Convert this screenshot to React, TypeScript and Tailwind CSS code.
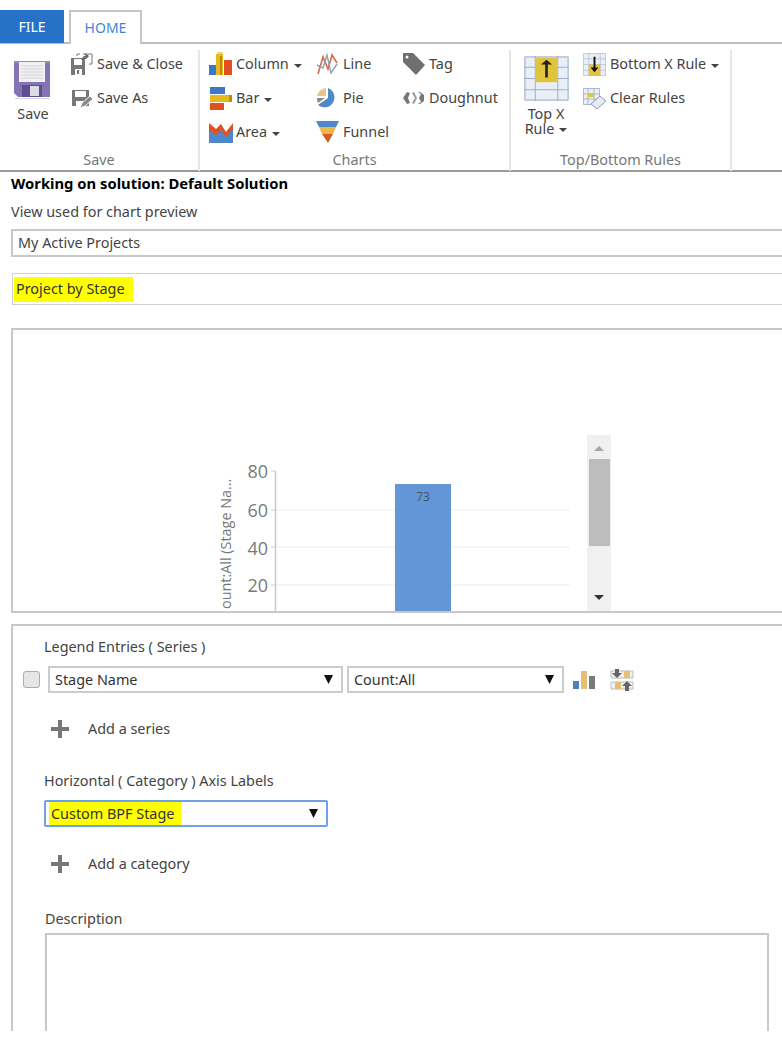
import React from 'react';

const Caret: React.FC<{ inline?: boolean }> = ({ inline }) => (
  <svg width="8" height="4" viewBox="0 0 8 4" className={inline ? 'ml-[5px] inline-block align-middle' : 'ml-[5px] mt-[3px] shrink-0'}>
    <path d="M0 0h8L4 4z" fill="#444" />
  </svg>
);

const SaveBig = () => (
  <svg width="38" height="40" viewBox="0 0 38 40">
    <path d="M1 1h36v36H5l-4-4z" fill="#8573b5" />
    <path d="M1 1h36v2H1z" fill="#9a8ac4" />
    <path d="M6 2h26v20H6z" fill="#f1f1f4" />
    <path d="M8 6h22M8 9h22M8 12h22M8 15h22M8 18h22" stroke="#d4d4da" strokeWidth="1" />
    <path d="M9 25h20v12H9z" fill="#5f4e91" />
    <path d="M17 26h9v10h-9z" fill="#dcdce2" />
    <path d="M2 38h35v1H2z" fill="#d5d5d5" />
  </svg>
);

const SaveClose = () => (
  <svg width="23" height="23" viewBox="0 0 23 23">
    <path d="M1 5h14v17H1z" fill="#777" />
    <path d="M4 6h8v6H4z" fill="#fff" />
    <path d="M5 16h7v6H5z" fill="#fff" />
    <path d="M7 17h2v4H7z" fill="#777" />
    <path d="M13 1h9M22 1v10M19 11h3M7 3V1h3" stroke="#777" fill="none" />
    <path d="M12 7c1-3 3-4 6-4M15 1l3 2-3 3" stroke="#666" strokeWidth="1.4" fill="none" />
  </svg>
);

const SaveAs = () => (
  <svg width="23" height="23" viewBox="0 0 23 23">
    <path d="M2 3h17v16H2z" fill="#777" />
    <path d="M5 4h11v6H5z" fill="#fff" />
    <path d="M6 14h7v5H6z" fill="#fff" />
    <path d="M10 21l2-5 8-7 3 3-8 7z" fill="#888" stroke="#fff" strokeWidth="1" />
  </svg>
);

const ColumnIcon = () => (
  <svg width="24" height="24" viewBox="0 0 24 24">
    <path d="M0 13h7v10H0z" fill="#3a78c8" />
    <path d="M7 2h7v21H7z" fill="#e8b820" />
    <path d="M9 0h4l1 2H8z" fill="#f2d56a" />
    <path d="M15 8h8v15h-8z" fill="#e2501f" />
    <path d="M11 4h2v19h-2z" fill="#b98c10" />
  </svg>
);

const BarIcon = () => (
  <svg width="24" height="24" viewBox="0 0 24 24">
    <path d="M1 1h15v7H1z" fill="#3a78c8" />
    <path d="M1 9h22v7H1z" fill="#e8b820" />
    <path d="M20 9h3v7h-3z" fill="#b98c10" />
    <path d="M1 17h14v7H1z" fill="#e2501f" />
  </svg>
);

const AreaIcon = () => (
  <svg width="24" height="22" viewBox="0 0 24 22">
    <path d="M0 6l7 5 6-3 5 6 6-8v16H0z" fill="#4f88c9" />
    <path d="M0 2l7 6 5-5 5 8 7-9v6l-7 8-5-7-5 5-7-5z" fill="#e2501f" />
  </svg>
);

const LineIcon = () => (
  <svg width="22" height="24" viewBox="0 0 22 24">
    <path d="M2 22L7 5l5 12 4-14 5 8" stroke="#d9694a" strokeWidth="1.6" fill="none" />
    <path d="M1 13l6 3 4-13 4 18 6-9" stroke="#8f9fb8" strokeWidth="1.4" fill="none" />
  </svg>
);

const PieIcon = () => (
  <svg width="22" height="22" viewBox="0 0 22 22">
    <path d="M12 1a10 10 0 1 1-10 17l10-7z" fill="#4f88c9" />
    <path d="M10 1v8H1a10 10 0 0 1 9-8z" fill="#e6c48a" />
    <path d="M1 11h8l-7 5a10 10 0 0 1-1-5z" fill="#8a8a8a" />
  </svg>
);

const FunnelIcon = () => (
  <svg width="24" height="24" viewBox="0 0 24 24">
    <path d="M0 1h23l-3 6H3z" fill="#4f88c9" />
    <path d="M3 7h17l-3 7H6z" fill="#ecb64c" />
    <path d="M6 14h11l-5 9z" fill="#cf5f24" />
  </svg>
);

const TagIcon = () => (
  <svg width="24" height="24" viewBox="0 0 24 24">
    <path d="M1 1h10l12 12-9 10L1 10z" fill="#6f6f6f" />
    <circle cx="5" cy="5" r="1.5" fill="#fff" />
  </svg>
);

const DoughnutIcon = () => (
  <svg width="24" height="14" viewBox="0 0 24 14">
    <path d="M5 1L1 7l4 6 3-1-2-5 2-5z" fill="#777" />
    <path d="M10 2l3 5-3 5 2 1 3-6-3-6z" fill="#999" />
    <path d="M16 1l3 2-2 4 2 4-3 2 2 0 4-3V4l-4-3z" fill="#777" />
  </svg>
);

const RuleGrid: React.FC<{ size: number; arrow: 'up' | 'down' }> = ({ size, arrow }) => (
  <svg width={size} height={size} viewBox="0 0 24 24">
    <path d="M0 0h24v24H0z" fill="#e9eef7" />
    <path d="M.5.5h23v23H.5zM6 0v24M18 0v24M0 6h24M0 12h24M0 18h24" stroke="#9aaac4" strokeWidth=".5" fill="none" />
    {arrow === 'up' ? (
      <>
        <path d="M6 1h12v13H6z" fill="#e2c43c" />
        <path d="M11.3 4.5v7h1.4v-7H15L12 2 9 4.5z" fill="#222" />
      </>
    ) : (
      <>
        <path d="M6 12h12v12H6z" fill="#e2c43c" />
        <path d="M11 4h2v11h3l-4 5-4-5h3z" fill="#111" />
      </>
    )}
  </svg>
);

const ClearRules = () => (
  <svg width="23" height="23" viewBox="0 0 23 23">
    <path d="M0 1h17v17H0z" fill="#e9eef7" />
    <path d="M.5 1.5h16v16H.5zM5 1v17M11 1v17M0 7h17M0 12h17" stroke="#8a9ab4" strokeWidth=".6" fill="none" />
    <path d="M5 6h6v4H5z" fill="#e2c43c" />
    <path d="M8 17l9-8 6 5-9 8z" fill="#e6ebf2" stroke="#8a9ab4" />
  </svg>
);

const RibbonItem: React.FC<{ icon: React.ReactNode; label: string; caret?: boolean }> = ({ icon, label, caret }) => (
  <div className="flex h-[34px] items-center">
    <div className="flex w-[27px] shrink-0 justify-start">{icon}</div>
    <span className="whitespace-nowrap">{label}</span>
    {caret && <Caret />}
  </div>
);

const RibbonGroup: React.FC<{ width: string; label: string; children: React.ReactNode }> = ({ width, label, children }) => (
  <div className={`flex h-[121px] flex-col border-r-2 border-[#e6e6e6] ${width}`}>
    <div className="flex h-[100px] flex-none">{children}</div>
    <div className="text-center text-[#777]">{label}</div>
  </div>
);

const Ribbon = () => (
  <div className="h-[128px] border-b-2 border-[#999] pt-[6px] text-[#444]">
    <div className="flex">
      <RibbonGroup width="w-[200px]" label="Save">
        <div className="flex w-[68px] flex-col items-center pr-[4px] pt-[10px]">
          <SaveBig />
          <span className="ml-[2px] mt-[4px]">Save</span>
        </div>
        <div className="-mt-[3px] ml-[2px]">
          <RibbonItem icon={<SaveClose />} label="Save & Close" />
          <RibbonItem icon={<SaveAs />} label="Save As" />
        </div>
      </RibbonGroup>
      <RibbonGroup width="w-[311px]" label="Charts">
        <div className="-mt-[3px] w-[116px] pl-[9px]">
          <RibbonItem icon={<ColumnIcon />} label="Column" caret />
          <RibbonItem icon={<BarIcon />} label="Bar" caret />
          <RibbonItem icon={<AreaIcon />} label="Area" caret />
        </div>
        <div className="-mt-[3px] w-[86px]">
          <RibbonItem icon={<LineIcon />} label="Line" />
          <RibbonItem icon={<PieIcon />} label="Pie" />
          <RibbonItem icon={<FunnelIcon />} label="Funnel" />
        </div>
        <div className="-mt-[3px]">
          <RibbonItem icon={<TagIcon />} label="Tag" />
          <RibbonItem icon={<DoughnutIcon />} label="Doughnut" />
        </div>
      </RibbonGroup>
      <RibbonGroup width="w-[221px]" label="Top/Bottom Rules">
        <div className="flex w-[72px] flex-col items-center pr-[2px] pt-[6px]">
          <RuleGrid size={45} arrow="up" />
          <span className="mt-[5px] text-center leading-[15px]">
            Top X
            <br />
            Rule
            <Caret inline />
          </span>
        </div>
        <div className="-mt-[3px]">
          <RibbonItem icon={<RuleGrid size={23} arrow="down" />} label="Bottom X Rule" caret />
          <RibbonItem icon={<ClearRules />} label="Clear Rules" />
        </div>
      </RibbonGroup>
    </div>
  </div>
);

const Triangle = () => (
  <svg width="9" height="9" viewBox="0 0 9 9" className="shrink-0">
    <path d="M0 0h9L4.5 9z" fill="#111" />
  </svg>
);

const Select: React.FC<{ width: string; children: React.ReactNode; focused?: boolean }> = ({ width, children, focused }) => (
  <div
    className={`flex h-[27px] items-center justify-between border-2 pr-[8px] ${width} ${
      focused ? 'rounded-[2px] border-[#6ea1e8]' : 'border-[#cccccc] pl-[5px]'
    }`}
  >
    {children}
    <Triangle />
  </div>
);

const AddRow: React.FC<{ label: string }> = ({ label }) => (
  <div className="ml-[38px] flex items-center text-[#444]">
    <svg width="18" height="18" viewBox="0 0 18 18">
      <path d="M7 0h4v7h7v4h-7v7H7v-7H0V7h7z" fill="#777" />
    </svg>
    <span className="ml-[19px]">{label}</span>
  </div>
);

const ChartPreview = () => (
  <svg width="769" height="281" viewBox="13 330 769 281" className="block">
    <g stroke="#f3f3f7" strokeWidth="1.5">
      <path d="M275 510h295M275 547h295M275 585h295" />
    </g>
    <path d="M275.5 471v140" stroke="#c6cad0" strokeWidth="1.5" />
    <path d="M271 471h4M271 510h4M271 547h4M271 585h4" stroke="#c6cad0" />
    <g fill="#7a7a7a" fontSize="18" textAnchor="end" fontFamily="'Open Sans', sans-serif">
      <text x="268" y="478">80</text>
      <text x="268" y="517">60</text>
      <text x="268" y="555">40</text>
      <text x="268" y="592">20</text>
    </g>
    <text
      transform="translate(231 609) rotate(-90)"
      fontSize="14.4"
      fill="#777"
      fontFamily="'Open Sans', sans-serif"
    >
      ount:All (Stage Na...
    </text>
    <rect x="395" y="484" width="56" height="127" fill="#6296d6" />
    <text x="423" y="501" fontSize="12" fill="#44546a" textAnchor="middle" fontFamily="'Open Sans', sans-serif">
      73
    </text>
    <rect x="587" y="435" width="24" height="176" fill="#f0f0f0" />
    <rect x="589" y="459" width="21" height="87" fill="#bdbdbd" />
    <path d="M594 451l5-5 5 5z" fill="#a6a6a6" />
    <path d="M594 595h10l-5 5z" fill="#333" />
  </svg>
);

const App: React.FC = () => {
  return (
    <div
      className="h-[1046px] w-[782px] overflow-hidden bg-white text-[14.4px] leading-[20px] text-[#333]"
      style={{ fontFamily: "'Noto Sans', 'Open Sans', sans-serif" }}
    >
      <div className="flex h-[44px] items-end border-b-2 border-[#bdbdbd] pt-[10px]">
        <div className="-mb-[1px] flex h-[33px] w-[64px] items-center justify-center bg-[#2672c8] text-[14px] text-white">FILE</div>
        <div className="relative -mb-[2px] ml-[5px] flex h-[34px] w-[73px] items-center justify-center border-2 border-b-0 border-[#c6c6c6] bg-white text-[14px] text-[#3f87d9]">
          HOME
        </div>
      </div>

      <Ribbon />

      <div className="w-[800px] pl-[11px]">
        <div className="mt-[1px] text-[14.8px] font-bold text-black">Working on solution: Default Solution</div>
        <div className="mt-[9px] text-[#444]">View used for chart preview</div>
        <div className="mt-[7px] flex h-[28px] items-center border-2 border-[#c8c8c8] pl-[5px] text-[#444]">My Active Projects</div>
        <div className="ml-[1px] mt-[16px] flex h-[32px] items-center border-y border-l border-[#d0d0d0] pl-[1px]">
          <span className="flex h-[25px] w-[119px] items-center whitespace-nowrap bg-[#ffff00] pl-[2px] text-[#333]">Project by Stage</span>
        </div>

        <div className="mt-[23px] h-[285px] overflow-hidden border-2 border-[#c8c8c8]">
          <ChartPreview />
        </div>

        <div className="mt-[11px] h-[407px] overflow-hidden border-l-2 border-t-2 border-[#c8c8c8]">
          <div className="ml-[31px] mt-[11px] text-[#444]">Legend Entries ( Series )</div>
          <div className="mt-[9px] flex items-center">
            <div className="ml-[10px] h-[17px] w-[17px] rounded-[3px] border border-[#adadad] bg-[#e6e6e6]" />
            <div className="ml-[8px] flex items-center gap-[4px] text-[#333]">
              <Select width="w-[295px]">Stage Name</Select>
              <Select width="w-[217px]">Count:All</Select>
            </div>
            <svg width="22" height="22" viewBox="0 0 22 22" className="ml-[9px]">
              <path d="M0 12h6v8H0z" fill="#4f7fbd" />
              <path d="M8 2h6v18H8z" fill="#e6bf77" />
              <path d="M16 7h6v13h-6z" fill="#7a7a7a" />
            </svg>
            <svg width="24" height="24" viewBox="0 0 24 24" className="ml-[15px]">
              <path d="M1 3h22v7H1zM1 14h22v7H1z" fill="#f0f0f0" stroke="#bdbdbd" />
              <path d="M14 3h6v7h-6zM5 14h6v7H5z" fill="#e6bf77" />
              <path d="M5 1h4v4h3l-5 5-5-5h3zM15 23h4v-5h3l-5-5-5 5h3z" fill="#666" />
            </svg>
          </div>
          <div className="mt-[26px]">
            <AddRow label="Add a series" />
          </div>
          <div className="ml-[31px] mt-[32px] text-[#444]">Horizontal ( Category ) Axis Labels</div>
          <div className="ml-[31px] mt-[9px]">
            <Select width="w-[284px]" focused>
              <span className="ml-[3px] flex h-[23px] w-[132px] items-center whitespace-nowrap bg-[#ffff00] pl-[2px]">Custom BPF Stage</span>
            </Select>
          </div>
          <div className="mt-[27px]">
            <AddRow label="Add a category" />
          </div>
          <div className="ml-[32px] mt-[35px] text-[#444]">Description</div>
          <div className="ml-[32px] mt-[4px] h-[200px] w-[724px] border-2 border-[#c8c8c8]" />
        </div>
      </div>
    </div>
  );
};

export default App;
